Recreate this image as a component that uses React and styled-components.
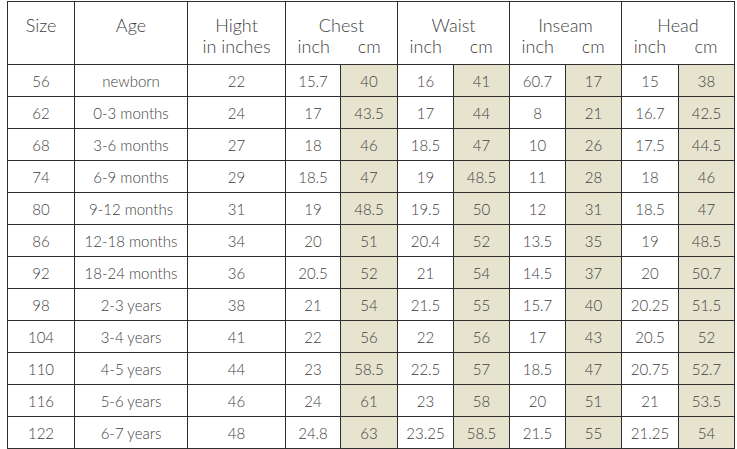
import React from 'react'
import styled, {createGlobalStyle} from 'styled-components'

const Global = createGlobalStyle`
body {
    margin: 0;
    background: #fff;
    font-family: Lato, "Open Sans", sans-serif;
}
`

const widths = [67, 113, 98, 55, 57, 56, 56, 56, 56, 57, 56]

const groups = ['Chest', 'Waist', 'Inseam', 'Head']

const rows = [
    ['56', 'newborn', '22', '15.7', '40', '16', '41', '60.7', '17', '15', '38'],
    ['62', '0-3 months', '24', '17', '43.5', '17', '44', '8', '21', '16.7', '42.5'],
    ['68', '3-6 months', '27', '18', '46', '18.5', '47', '10', '26', '17.5', '44.5'],
    ['74', '6-9 months', '29', '18.5', '47', '19', '48.5', '11', '28', '18', '46'],
    ['80', '9-12 months', '31', '19', '48.5', '19.5', '50', '12', '31', '18.5', '47'],
    ['86', '12-18 months', '34', '20', '51', '20.4', '52', '13.5', '35', '19', '48.5'],
    ['92', '18-24 months', '36', '20.5', '52', '21', '54', '14.5', '37', '20', '50.7'],
    ['98', '2-3 years', '38', '21', '54', '21.5', '55', '15.7', '40', '20.25', '51.5'],
    ['104', '3-4 years', '41', '22', '56', '22', '56', '17', '43', '20.5', '52'],
    ['110', '4-5 years', '44', '23', '58.5', '22.5', '57', '18.5', '47', '20.75', '52.7'],
    ['116', '5-6 years', '46', '24', '61', '23', '58', '20', '51', '21', '53.5'],
    ['122', '6-7 years', '48', '24.8', '63', '23.25', '58.5', '21.5', '55', '21.25', '54'],
]

const App = () => {
    return (
        <Wrap>
            <Global/>
            <Table>
                <colgroup>
                    {widths.map((w, i) => <col key={i} style={{width: w}}/>)}
                </colgroup>
                <thead>
                    <tr>
                        <Th>Size</Th>
                        <Th>Age</Th>
                        <Th>Hight<br/>in inches</Th>
                        {groups.map(g => (
                            <Th key={g} colSpan={2}>
                                {g}
                                <Units>
                                    <span>inch</span>
                                    <span>cm</span>
                                </Units>
                            </Th>
                        ))}
                    </tr>
                </thead>
                <tbody>
                    {rows.map(r => (
                        <tr key={r[0]}>
                            {r.map((v, i) => (
                                <Td key={i} shaded={i > 3 && i % 2 === 0}>{v}</Td>
                            ))}
                        </tr>
                    ))}
                </tbody>
            </Table>
        </Wrap>
    )
}

export default App

const Wrap = styled.div`
padding: 1px 0 0 7px;
width: 737px;
height: 449px;
box-sizing: border-box;
`

const Table = styled.table`
border-collapse: collapse;
table-layout: fixed;
width: 728px;
color: #3f3f3f;
font-weight: 300;
`

const Th = styled.th`
border: 1.5px solid #2e2e2e;
height: 63px;
padding: 13px 0 0;
box-sizing: border-box;
font-weight: 300;
font-size: 18px;
line-height: 21px;
text-align: center;
vertical-align: top;
`

const Units = styled.div`
display: grid;
grid-template-columns: 1fr 1fr;
span{
    text-align: center;
}
`

const Td = styled.td.withConfig({shouldForwardProp: p => p !== 'shaded'})`
border: 1.5px solid #2e2e2e;
height: 31px;
padding: 0;
font-size: 15px;
text-align: center;
vertical-align: middle;
background: ${p => p.shaded ? '#e6e3cf' : '#fff'};
`
